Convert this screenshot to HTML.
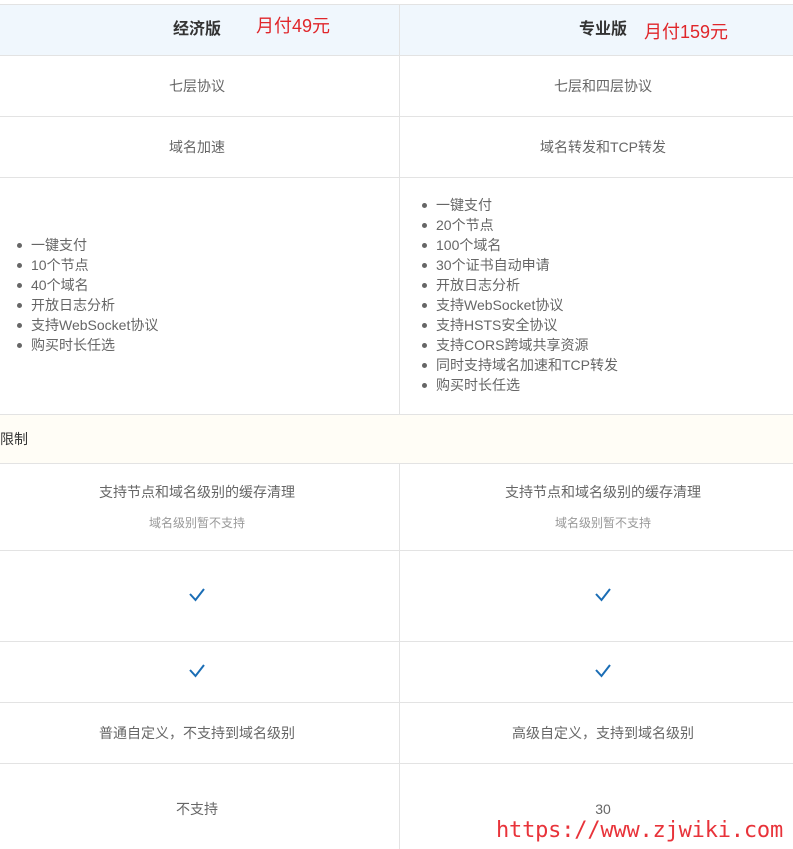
<!DOCTYPE html>
<html><head><meta charset="utf-8"><style>
*{margin:0;padding:0;box-sizing:border-box}
body{width:793px;height:849px;background:#fff;position:relative;overflow:hidden;font-family:"Liberation Sans","Microsoft YaHei","Noto Sans CJK SC",sans-serif;color:#666;font-size:14px}
.h{position:absolute;left:0;width:793px;height:1px;background:#e3e3e3}
.v{position:absolute;left:399px;width:1px;background:#e3e3e3}
.t{position:absolute;white-space:nowrap;line-height:16px}
.c{transform:translateX(-50%)}
.red{color:#e0262a;font-size:18px;line-height:20px}
ul{position:absolute;list-style:none;line-height:20px}
li{position:relative;padding-left:31px}
li:before{content:"";position:absolute;left:17px;top:8px;width:5px;height:5px;border-radius:50%;background:#666}
svg{position:absolute}
</style></head><body>
<div style="position:absolute;left:0;top:4px;width:793px;height:51px;background:#f0f7fd"></div>
<div style="position:absolute;left:0;top:415px;width:793px;height:48px;background:#fffdf6"></div>
<div class="h" style="top:4px"></div>
<div class="h" style="top:55px"></div>
<div class="h" style="top:116px"></div>
<div class="h" style="top:177px"></div>
<div class="h" style="top:414px"></div>
<div class="h" style="top:463px"></div>
<div class="h" style="top:550px"></div>
<div class="h" style="top:641px"></div>
<div class="h" style="top:702px"></div>
<div class="h" style="top:763px"></div>
<div class="v" style="top:4px;height:410px"></div>
<div class="v" style="top:463px;height:386px"></div>

<div class="t c" style="left:197px;top:22px;font-weight:bold;font-size:16px;color:#333">经济版</div>
<div class="t red" style="left:256px;top:16px">月付49元</div>
<div class="t c" style="left:603px;top:22px;font-weight:bold;font-size:16px;color:#333">专业版</div>
<div class="t red" style="left:644px;top:22px">月付159元</div>

<div class="t c" style="left:197px;top:78px">七层协议</div>
<div class="t c" style="left:603px;top:78px">七层和四层协议</div>
<div class="t c" style="left:197px;top:139px">域名加速</div>
<div class="t c" style="left:603px;top:139px">域名转发和TCP转发</div>

<ul style="left:0;top:235px"><li>一键支付</li><li>10个节点</li><li>40个域名</li><li>开放日志分析</li><li>支持WebSocket协议</li><li>购买时长任选</li></ul>
<ul style="left:405px;top:195px"><li>一键支付</li><li>20个节点</li><li>100个域名</li><li>30个证书自动申请</li><li>开放日志分析</li><li>支持WebSocket协议</li><li>支持HSTS安全协议</li><li>支持CORS跨域共享资源</li><li>同时支持域名加速和TCP转发</li><li>购买时长任选</li></ul>

<div class="t" style="left:0;top:431px;color:#333">限制</div>

<div class="t c" style="left:197px;top:484px">支持节点和域名级别的缓存清理</div>
<div class="t c" style="left:197px;top:515px;font-size:12px;color:#999">域名级别暂不支持</div>
<div class="t c" style="left:603px;top:484px">支持节点和域名级别的缓存清理</div>
<div class="t c" style="left:603px;top:515px;font-size:12px;color:#999">域名级别暂不支持</div>

<svg style="left:188px;top:587px" width="18" height="16"><path d="M2 7 L7.5 13 L16 2" fill="none" stroke="#1a6db5" stroke-width="2"/></svg>
<svg style="left:594px;top:587px" width="18" height="16"><path d="M2 7 L7.5 13 L16 2" fill="none" stroke="#1a6db5" stroke-width="2"/></svg>
<svg style="left:188px;top:663px" width="18" height="16"><path d="M2 7 L7.5 13 L16 2" fill="none" stroke="#1a6db5" stroke-width="2"/></svg>
<svg style="left:594px;top:663px" width="18" height="16"><path d="M2 7 L7.5 13 L16 2" fill="none" stroke="#1a6db5" stroke-width="2"/></svg>

<div class="t c" style="left:197px;top:725px">普通自定义，不支持到域名级别</div>
<div class="t c" style="left:603px;top:725px">高级自定义，支持到域名级别</div>
<div class="t c" style="left:197px;top:801px">不支持</div>
<div class="t c" style="left:603px;top:801px">30</div>

<div class="t" style="left:496px;top:817px;font-family:'DejaVu Sans Mono','Liberation Mono',monospace;font-size:22px;line-height:28px;color:#e8333a;letter-spacing:-0.2px">https://www.zjwiki.com</div>
</body></html>
